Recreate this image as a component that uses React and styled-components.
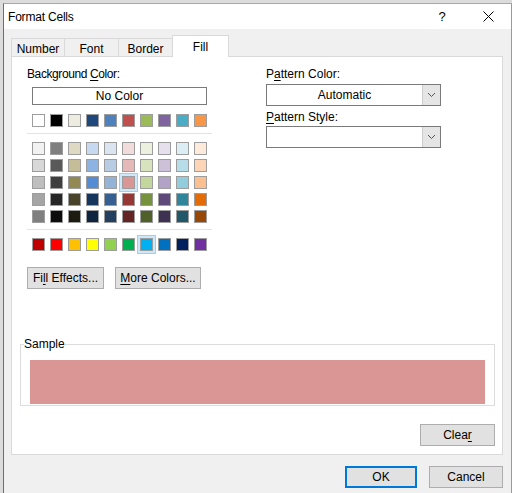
import React from "react";
import styled, { createGlobalStyle, css } from "styled-components";

const Global = createGlobalStyle`
  html, body { margin: 0; padding: 0; }
  body {
    background: #dcdcdc;
    font-family: "Segoe UI", "Liberation Sans", Arial, sans-serif;
    font-size: 12px;
    color: #000;
    overflow: hidden;
  }
`;

const Window = styled.div`
  margin: 3px 0 0 3px;
  width: 507px;
  height: 500px;
  background: #f0f0f0;
  border-left: 1px solid #6e6e6e;
  border-top: 1px solid #a8a8a8;
  border-right: 1px solid #9a9a9a;
  display: flex;
  flex-direction: column;
`;

const TitleBar = styled.div`
  height: 25px;
  background: #fff;
  display: flex;
  align-items: center;
  padding-left: 4px;
`;

const Title = styled.div`
  flex: 1;
  font-size: 12px;
  letter-spacing: -0.2px;
`;

const TitleBtn = styled.div`
  width: 46px;
  height: 25px;
  display: flex;
  align-items: center;
  justify-content: center;
  font-size: 13px;
`;

const Body = styled.div`
  padding: 6px 7px 0 7px;
  display: flex;
  flex-direction: column;
`;

const Tabs = styled.div`
  display: flex;
  align-items: flex-end;
  height: 21px;
  position: relative;
  z-index: 1;
`;

const Tab = styled.div`
  box-sizing: border-box;
  height: 18px;
  width: ${(p) => p.$w}px;
  border: 1px solid #d9d9d9;
  border-bottom: none;
  border-left-width: ${(p) => (p.$first ? 1 : 0)}px;
  background: #f0f0f0;
  display: flex;
  align-items: flex-start;
  justify-content: center;
  padding-top: 3px;
  line-height: 15px;
  ${(p) =>
    p.$active &&
    css`
      height: 22px;
      margin-bottom: -1px;
      background: #fff;
      border-left-width: 1px;
      margin-left: -1px;
      padding-top: 4px;
    `}
`;

const Panel = styled.div`
  box-sizing: border-box;
  width: 492px;
  height: 399px;
  background: #fff;
  border: 1px solid #d9d9d9;
  display: flex;
  flex-direction: column;
  padding: 9px 0 0 8px;
`;

const Top = styled.div`
  display: flex;
`;

const LeftCol = styled.div`
  width: 185px;
  padding-left: 7px;
  display: flex;
  flex-direction: column;
`;

const RightCol = styled.div`
  margin-left: 54px;
  width: 175px;
  display: flex;
  flex-direction: column;
`;

const Label = styled.div`
  height: 16px;
  line-height: 16px;
  letter-spacing: ${(p) => p.$ls || 0}px;
`;

const U = styled.span`
  text-decoration: underline;
  text-underline-offset: 2px;
`;

const NoColorBtn = styled.div`
  box-sizing: border-box;
  margin: 5px 0 0 5px;
  width: 175px;
  height: 18px;
  border: 1px solid #7a7a7a;
  display: flex;
  align-items: center;
  justify-content: center;
`;

const SwatchRow = styled.div`
  display: flex;
  gap: 5px;
  margin-left: 5px;
  margin-top: ${(p) => p.$mt}px;
`;

const Swatch = styled.div`
  box-sizing: border-box;
  width: 13px;
  height: 13px;
  border: 1px solid #9d9d9d;
  background: ${(p) => p.$c};
  ${(p) =>
    p.$hl &&
    css`
      box-shadow: 0 0 0 2px #cde8fb, 0 0 0 3px #9ccff5;
    `}
`;

const Sep = styled.div`
  height: 1px;
  background: #e3e3e3;
  width: 185px;
  margin-top: ${(p) => p.$mt}px;
`;

const BtnRow = styled.div`
  display: flex;
  gap: 11px;
  margin-top: 16px;
`;

const Button = styled.div`
  box-sizing: border-box;
  height: 22px;
  width: ${(p) => p.$w}px;
  background: #e1e1e1;
  border: 1px solid #adadad;
  display: flex;
  align-items: center;
  justify-content: center;
  ${(p) =>
    p.$default &&
    css`
      border: 2px solid #0078d7;
    `}
`;

const Select = styled.div`
  box-sizing: border-box;
  height: 22px;
  width: 175px;
  border: 1px solid #7a7a7a;
  display: flex;
  margin-top: ${(p) => p.$mt}px;
  margin-bottom: 3px;
`;

const SelectValue = styled.div`
  flex: 1;
  display: flex;
  align-items: center;
  justify-content: center;
`;

const SelectArrow = styled.div`
  width: 17px;
  background: #e5e5e5;
  border-left: 1px solid #ccc;
  display: flex;
  align-items: center;
  justify-content: center;
`;

const Group = styled.fieldset`
  box-sizing: border-box;
  margin: 49px 0 0 0;
  width: 475px;
  height: 68px;
  border: 1px solid #dcdcdc;
  padding: 0 9px 0 9px;
`;

const Legend = styled.legend`
  padding: 0;
  margin-left: -6px;
  line-height: 13px;
`;

const SampleFill = styled.div`
  height: 44px;
  margin-top: 9px;
  background: ${(p) => p.$c};
`;

const ClearRow = styled.div`
  display: flex;
  justify-content: flex-end;
  width: 475px;
  margin-top: 18px;
`;

const Footer = styled.div`
  display: flex;
  justify-content: flex-end;
  gap: 12px;
  padding: 11px 1px 0 0;
`;

const Chevron = () => (
  <svg width="9" height="6" viewBox="0 0 9 6">
    <path d="M1 1 L4.5 4.5 L8 1" fill="none" stroke="#555" strokeWidth="1" />
  </svg>
);

const CloseIcon = () => (
  <svg width="11" height="11" viewBox="0 0 11 11">
    <path d="M0.5 0.5 L10.5 10.5 M10.5 0.5 L0.5 10.5" stroke="#000" strokeWidth="1" />
  </svg>
);

const main = ["#FFFFFF", "#000000", "#EEECE1", "#1F497D", "#4F81BD", "#C0504D", "#9BBB59", "#8064A2", "#4BACC6", "#F79646"];
const tints = [
  ["#F2F2F2", "#7F7F7F", "#DDD9C3", "#C6D9F0", "#DBE5F1", "#F2DCDB", "#EBF1DD", "#E5E0EC", "#DBEEF3", "#FDEADA"],
  ["#D8D8D8", "#595959", "#C4BD97", "#8DB3E2", "#B8CCE4", "#E5B9B7", "#D7E3BC", "#CCC1D9", "#B7DDE8", "#FBD5B5"],
  ["#BFBFBF", "#3F3F3F", "#938953", "#548DD4", "#95B3D7", "#D99694", "#C3D69B", "#B2A2C7", "#92CDDC", "#FAC08F"],
  ["#A5A5A5", "#262626", "#494429", "#17365D", "#366092", "#953734", "#76923C", "#5F497A", "#31859B", "#E36C09"],
  ["#7F7F7F", "#0C0C0C", "#1D1B10", "#0F243E", "#244061", "#632423", "#4F6128", "#3F3151", "#205867", "#974806"],
];
const standard = ["#C00000", "#FF0000", "#FFC000", "#FFFF00", "#92D050", "#00B050", "#00B0F0", "#0070C0", "#002060", "#7030A0"];

export default function App() {
  return (
    <>
      <Global />
      <Window>
        <TitleBar>
          <Title>Format Cells</Title>
          <TitleBtn>?</TitleBtn>
          <TitleBtn>
            <CloseIcon />
          </TitleBtn>
        </TitleBar>
        <Body>
          <Tabs>
            <Tab $w={54} $first>Number</Tab>
            <Tab $w={54}>Font</Tab>
            <Tab $w={54}>Border</Tab>
            <Tab $w={57} $active>Fill</Tab>
          </Tabs>
          <Panel>
            <Top>
              <LeftCol>
                <Label $ls={-0.4}>
                  Background <U>C</U>olor:
                </Label>
                <NoColorBtn>No Color</NoColorBtn>
                <SwatchRow $mt={9}>
                  {main.map((c, i) => (
                    <Swatch key={i} $c={c} />
                  ))}
                </SwatchRow>
                <Sep $mt={6} />
                {tints.map((row, r) => (
                  <SwatchRow key={r} $mt={r === 0 ? 8 : 4}>
                    {row.map((c, i) => (
                      <Swatch key={i} $c={c} $hl={r === 2 && i === 5} />
                    ))}
                  </SwatchRow>
                ))}
                <Sep $mt={6} />
                <SwatchRow $mt={8}>
                  {standard.map((c, i) => (
                    <Swatch key={i} $c={c} $hl={i === 6} />
                  ))}
                </SwatchRow>
                <BtnRow>
                  <Button $w={77}>
                    Fi<U>l</U>l Effects...
                  </Button>
                  <Button $w={86}>
                    <U>M</U>ore Colors...
                  </Button>
                </BtnRow>
              </LeftCol>
              <RightCol>
                <Label>
                  P<U>a</U>ttern Color:
                </Label>
                <Select $mt={2}>
                  <SelectValue>Automatic</SelectValue>
                  <SelectArrow>
                    <Chevron />
                  </SelectArrow>
                </Select>
                <Label>
                  <U>P</U>attern Style:
                </Label>
                <Select $mt={1}>
                  <SelectValue />
                  <SelectArrow>
                    <Chevron />
                  </SelectArrow>
                </Select>
              </RightCol>
            </Top>
            <Group>
              <Legend>Sample</Legend>
              <SampleFill $c="#D99694" />
            </Group>
            <ClearRow>
              <Button $w={75}>
                Clea<U>r</U>
              </Button>
            </ClearRow>
          </Panel>
          <Footer>
            <Button $w={72} $default>OK</Button>
            <Button $w={74}>Cancel</Button>
          </Footer>
        </Body>
      </Window>
    </>
  );
}
